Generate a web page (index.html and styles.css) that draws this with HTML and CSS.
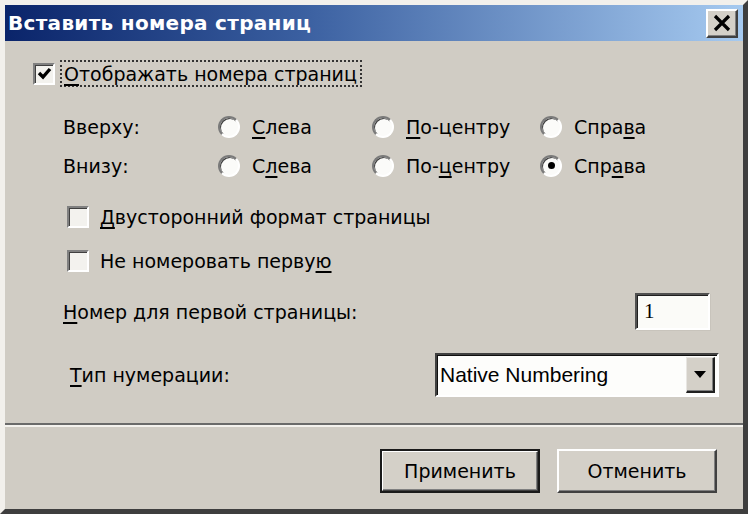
FILE: index.html
```html
<!DOCTYPE html>
<html lang="ru">
<head>
<meta charset="utf-8">
<title>Вставить номера страниц</title>
<link rel="stylesheet" href="styles.css">
</head>
<body>
<div class="window">
  <div class="titlebar">
    <span class="title">Вставить номера страниц</span>
    <span class="close">
      <svg width="20" height="18" viewBox="0 0 20 18"><path d="M3 2 L17 16 M17 2 L3 16" stroke="#000" stroke-width="3.2" fill="none"/></svg>
    </span>
  </div>
  <div class="body">
    <div class="main-check">
      <span class="box"><svg width="17" height="17" viewBox="0 0 17 17"><path d="M3 8 L7 12 L14 4" stroke="#000" stroke-width="3.4" fill="none"/></svg></span>
      <span class="focus"><u>О</u>тображать номера страниц</span>
    </div>
    <div class="pos-grid">
      <span class="lbl">Вверху:</span>
      <span class="radio"><span class="circle"></span><span><u>С</u>лева</span></span>
      <span class="radio"><span class="circle"></span><span><u>П</u>о-центру</span></span>
      <span class="radio"><span class="circle"></span><span>Спра<u>в</u>а</span></span>
      <span class="lbl">Внизу:</span>
      <span class="radio"><span class="circle"></span><span>С<u>л</u>ева</span></span>
      <span class="radio"><span class="circle"></span><span>По-<u>ц</u>ентру</span></span>
      <span class="radio"><span class="circle on"></span><span>Спр<u>а</u>ва</span></span>
    </div>
    <div class="check first"><span class="box"></span><span><u>Д</u>вусторонний формат страницы</span></div>
    <div class="check"><span class="box"></span><span>Не номеровать перву<u>ю</u></span></div>
    <div class="num-row">
      <span class="lbl"><u>Н</u>омер для первой страницы:</span>
      <span class="input">1</span>
    </div>
    <div class="type-row">
      <span class="lbl"><u>Т</u>ип нумерации:</span>
      <span class="select">
        <span class="value">Native Numbering</span>
        <span class="arrow"><svg width="12" height="7" viewBox="0 0 12 7"><path d="M0 0 H12 L6 7 Z" fill="#000"/></svg></span>
      </span>
    </div>
  </div>
  <div class="sep"></div>
  <div class="buttons">
    <span class="btn default"><span class="btn-in">Применить</span></span>
    <span class="btn"><span class="btn-in">Отменить</span></span>
  </div>
</div>
</body>
</html>
```
FILE: styles.css
```css
html, body {
  margin: 0;
  padding: 0;
  background: #3c3c3c;
}
.window {
  width: 748px;
  height: 514px;
  box-sizing: border-box;
  border-style: solid;
  border-width: 5px 5px 5px 5px;
  border-color: #f2f0ec #3e3e3e #3e3e3e #f2f0ec;
  background: #d0ccc4;
  font-family: "DejaVu Sans", sans-serif;
  font-size: 19px;
  color: #000;
  display: flex;
  flex-direction: column;
  overflow: hidden;
}
u {
  text-decoration-thickness: 2px;
  text-underline-offset: 3px;
}
.titlebar {
  height: 36px;
  flex: none;
  display: flex;
  align-items: center;
  padding-left: 3px;
  background: linear-gradient(to right, #0a246a 0%, #3a5fa0 40%, #a6caf0 100%);
}
.title {
  color: #fff;
  font-weight: bold;
  font-size: 20px;
  letter-spacing: 0.3px;
}
.close {
  margin-left: auto;
  margin-right: 5px;
  width: 32px;
  height: 29px;
  box-sizing: border-box;
  background: #d4d0c8;
  border-style: solid;
  border-width: 2px;
  border-color: #ffffff #404040 #404040 #ffffff;
  box-shadow: inset -1px -1px 0 #808080;
  display: flex;
  align-items: center;
  justify-content: center;
}
.body {
  flex: none;
}
.box {
  width: 22px;
  height: 22px;
  box-sizing: border-box;
  flex: none;
  background: #f3f2ee;
  border-style: solid;
  border-width: 2px;
  border-color: #808080 #ffffff #ffffff #808080;
  box-shadow: inset 1px 1px 0 #404040;
  display: flex;
  align-items: center;
  justify-content: center;
}
.main-check {
  display: flex;
  align-items: center;
  margin: 19px 0 0 28px;
  height: 27px;
}
.focus {
  margin-left: 5px;
  padding: 0 3px 0 2px;
  height: 27px;
  box-sizing: border-box;
  border: 2px dotted #333;
  display: flex;
  align-items: center;
}
.pos-grid {
  display: grid;
  grid-template-columns: 155px 154px 168px auto;
  grid-auto-rows: 39px;
  align-items: center;
  margin: 20px 0 0 58px;
}
.radio {
  display: flex;
  align-items: center;
  gap: 12px;
}
.circle {
  width: 22px;
  height: 22px;
  box-sizing: border-box;
  border-radius: 50%;
  background: #fbfbf9;
  border-style: solid;
  border-width: 2px;
  border-color: #7a7a7a #ffffff #ffffff #7a7a7a;
  box-shadow: inset 1px 1px 0 #404040;
  display: flex;
  align-items: center;
  justify-content: center;
}
.circle.on::after {
  content: "";
  width: 7px;
  height: 7px;
  border-radius: 50%;
  background: #000;
}
.check {
  display: flex;
  align-items: center;
  gap: 11px;
  height: 44px;
  margin-left: 62px;
}
.check.first {
  margin-top: 10px;
}
.num-row {
  display: flex;
  align-items: center;
  height: 37px;
  margin-top: 10px;
  padding-left: 58px;
}
.input {
  margin-left: auto;
  margin-right: 33px;
  width: 75px;
  height: 37px;
  box-sizing: border-box;
  background: #fbfbf8;
  border-style: solid;
  border-width: 2px;
  border-color: #505050 #ffffff #ffffff #505050;
  box-shadow: inset 1px 1px 0 #202020, 1px 1px 0 #c8c4bc;
  font-family: "Liberation Serif", serif;
  font-size: 21px;
  padding-left: 7px;
  display: flex;
  align-items: center;
}
.type-row {
  display: flex;
  align-items: center;
  height: 44px;
  margin-top: 23px;
  padding-left: 65px;
}
.select {
  margin-left: auto;
  margin-right: 24px;
  width: 284px;
  height: 44px;
  box-sizing: border-box;
  background: #fdfdfb;
  border-style: solid;
  border-width: 2px;
  border-color: #404040 #ffffff #ffffff #404040;
  box-shadow: inset 1px 1px 0 #101010;
  display: flex;
  align-items: center;
  padding: 2px 2px 2px 3px;
}
.value {
  flex: 1;
  font-family: "Liberation Sans", sans-serif;
  font-size: 21px;
}
.arrow {
  width: 29px;
  height: 36px;
  box-sizing: border-box;
  background: #d4d0c8;
  border-style: solid;
  border-width: 1px 2px 2px 1px;
  border-color: #e8e6e2 #202020 #202020 #e8e6e2;
  box-shadow: inset -1px -1px 0 #808080;
  display: flex;
  align-items: center;
  justify-content: center;
}
.sep {
  margin-top: 26px;
  height: 0;
  border-top: 2px solid #6a6a6a;
  border-bottom: 2px solid #f4f2ee;
}
.buttons {
  display: flex;
  justify-content: flex-end;
  gap: 17px;
  margin-top: 22px;
  padding-right: 26px;
}
.btn {
  width: 160px;
  height: 44px;
  box-sizing: border-box;
  display: flex;
  border-style: solid;
  border-width: 2px;
  border-color: #ffffff #404040 #404040 #ffffff;
  background: #d4d0c8;
}
.btn.default {
  border: 2px solid #1a1a1a;
}
.btn-in {
  flex: 1;
  display: flex;
  align-items: center;
  justify-content: center;
  box-shadow: inset -1px -1px 0 #808080;
}
.btn.default .btn-in {
  border-style: solid;
  border-width: 1px;
  border-color: #ffffff #404040 #404040 #ffffff;
}
```
